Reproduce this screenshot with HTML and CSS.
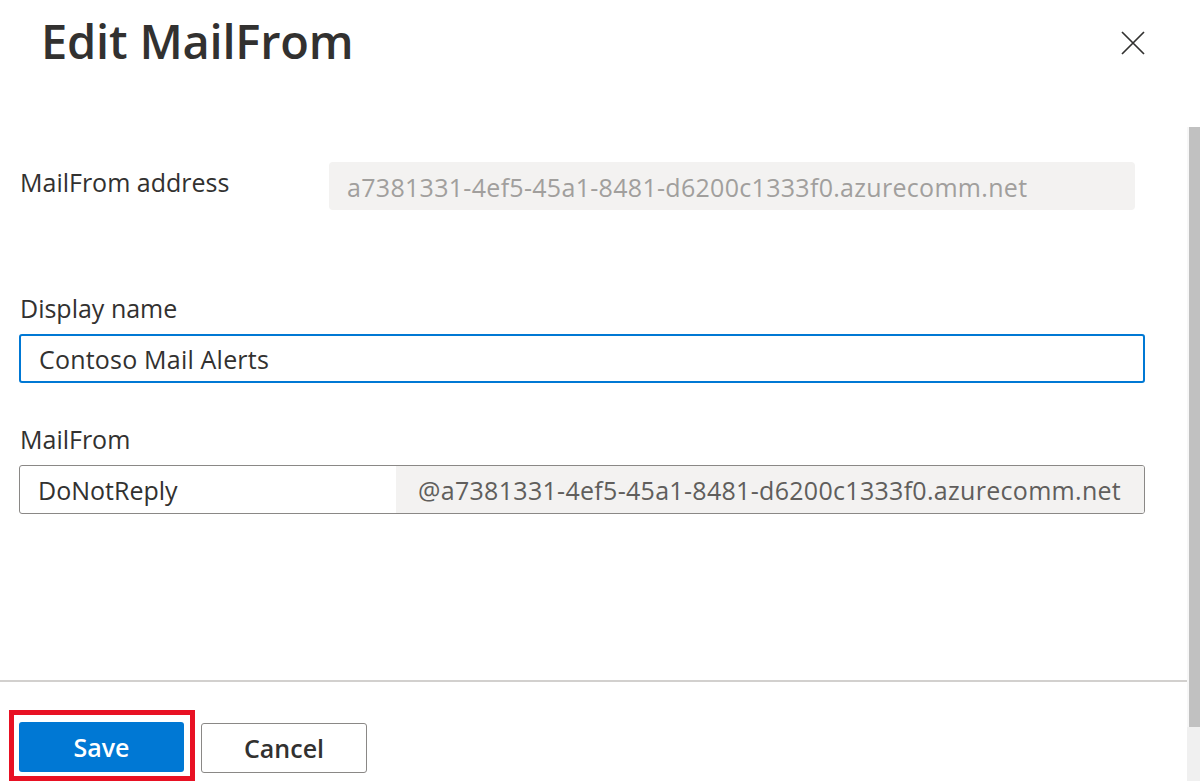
FILE: index.html
```html
<!DOCTYPE html>
<html lang="en">
<head>
<meta charset="utf-8">
<title>Edit MailFrom</title>
<link rel="stylesheet" href="styles.css">
</head>
<body>
<div class="page">
  <div class="panel">
    <header class="head">
      <h1 class="title">Edit MailFrom</h1>
      <button class="close" aria-label="Close">
        <svg width="24" height="24" viewBox="0 0 24 24"><path d="M1 1 L23 23 M23 1 L1 23" stroke="#323130" stroke-width="1.7" fill="none"/></svg>
      </button>
    </header>
    <main class="body">
      <div class="row-inline">
        <label class="label inline">MailFrom address</label>
        <div class="readonly">a7381331-4ef5-45a1-8481-d6200c1333f0.azurecomm.net</div>
      </div>
      <div class="field first">
        <label class="label">Display name</label>
        <div class="input focused">Contoso Mail Alerts</div>
      </div>
      <div class="field second">
        <label class="label">MailFrom</label>
        <div class="input combo">
          <span class="combo-value">DoNotReply</span>
          <span class="combo-suffix">@a7381331-4ef5-45a1-8481-d6200c1333f0.azurecomm.net</span>
        </div>
      </div>
    </main>
    <footer class="foot">
      <div class="highlight">
        <button class="btn primary">Save</button>
      </div>
      <button class="btn secondary">Cancel</button>
    </footer>
  </div>
  <div class="scrollbar">
    <div class="sb-top"></div>
    <div class="sb-thumb"></div>
    <div class="sb-rest"></div>
  </div>
</div>
</body>
</html>
```
FILE: styles.css
```css
* { box-sizing: border-box; }
html, body { margin: 0; padding: 0; background: #ffffff; }
body {
  font-family: "Open Sans", "Noto Sans", "Liberation Sans", sans-serif;
  color: #323130;
  width: 1200px;
  height: 781px;
  overflow: hidden;
}
.page {
  display: flex;
  height: 781px;
}
.panel {
  flex: 1;
  display: flex;
  flex-direction: column;
  min-width: 0;
}
.head {
  height: 126px;
  display: flex;
  align-items: flex-start;
  justify-content: space-between;
  padding: 0 42px 0 41px;
}
.title {
  margin: 0;
  padding-top: 9px;
  font-size: 47px;
  font-weight: 600;
  line-height: 64px;
  color: #323130;
  letter-spacing: -0.2px;
}
.close {
  margin-top: 31px;
  padding: 0;
  border: 0;
  background: none;
  width: 24px;
  height: 24px;
  display: flex;
}
.body {
  flex: 1;
  padding: 36px 42px 0 19px;
}
.row-inline {
  display: flex;
  align-items: flex-start;
  padding-right: 10px;
}
.label {
  display: block;
  font-size: 25px;
  line-height: 28px;
  color: #323130;
  padding-left: 1px;
}
.label.inline {
  width: 310px;
  flex: none;
  padding-top: 6px;
}
.readonly {
  flex: 1;
  height: 48px;
  background: #f3f2f1;
  border-radius: 4px;
  color: #a19f9d;
  font-size: 25px;
  line-height: 50px;
  padding-left: 18px;
  letter-spacing: 0.3px;
  white-space: nowrap;
  overflow: hidden;
}
.field.first { margin-top: 84px; }
.field.second { margin-top: 42px; }
.field .label { margin-bottom: 12px; }
.input {
  height: 49px;
  border: 1px solid #8a8886;
  border-radius: 3px;
  font-size: 25px;
  line-height: 49px;
  color: #323130;
  padding-left: 18px;
}
.input.focused {
  border: 2px solid #0078d4;
  line-height: 47px;
  letter-spacing: 0.2px;
}
.input.combo {
  display: flex;
  padding-left: 0;
  overflow: hidden;
  line-height: 49px;
}
.combo-value {
  width: 376px;
  flex: none;
  padding-left: 18px;
}
.combo-suffix {
  flex: 1;
  background: #f3f2f1;
  color: #605e5c;
  padding-left: 22px;
  letter-spacing: 0.3px;
  white-space: nowrap;
}
.foot {
  height: 101px;
  border-top: 2px solid #d2d0ce;
  display: flex;
  align-items: flex-start;
  padding: 28px 0 0 9px;
  gap: 6px;
}
.highlight {
  border: 5px solid #e81123;
  padding: 7px 6px 3px 5px;
  height: 71px;
}
.btn {
  height: 50px;
  font-family: "Open Sans", "Noto Sans", "Liberation Sans", sans-serif;
  font-size: 25px;
  font-weight: 600;
  border-radius: 3px;
  cursor: pointer;
}
.primary {
  width: 165px;
  background: #0078d4;
  color: #ffffff;
  border: 0;
}
.secondary {
  margin-top: 13px;
  width: 166px;
  background: #ffffff;
  color: #323130;
  border: 1px solid #8a8886;
}
.scrollbar {
  width: 13px;
  flex: none;
  display: flex;
  flex-direction: column;
}
.sb-top { height: 127px; background: #ffffff; }
.sb-thumb {
  height: 600px;
  background: #c1c1c1;
  margin-left: 2px;
  box-shadow: -2px 0 0 #f7f7f7;
}
.sb-rest { flex: 1; background: #f0f0f0; }
```
